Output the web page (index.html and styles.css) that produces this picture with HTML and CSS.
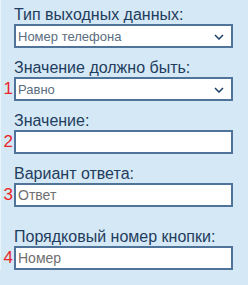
FILE: index.html
```html
<!DOCTYPE html>
<html lang="ru">
<head>
    <meta charset="UTF-8">
    <title>Настройки кнопки</title>
    <link rel="stylesheet" href="styles.css">
</head>
<body>
    <div class="panel">
        <div class="field">
            <label for="output-type">Тип выходных данных:</label>
            <div class="row">
                <span class="num"></span>
                <div class="select-wrap">
                    <select id="output-type">
                        <option>Номер телефона</option>
                    </select>
                    <svg class="chevron" width="10" height="6" viewBox="0 0 10 6"><path d="M1 1l4 4 4-4" fill="none" stroke="#1d3f66" stroke-width="1.5"/></svg>
                </div>
            </div>
        </div>
        <div class="field">
            <label for="compare">Значение должно быть:</label>
            <div class="row">
                <span class="num">1</span>
                <div class="select-wrap">
                    <select id="compare">
                        <option>Равно</option>
                    </select>
                    <svg class="chevron" width="10" height="6" viewBox="0 0 10 6"><path d="M1 1l4 4 4-4" fill="none" stroke="#1d3f66" stroke-width="1.5"/></svg>
                </div>
            </div>
        </div>
        <div class="field">
            <label for="value">Значение:</label>
            <div class="row">
                <span class="num">2</span>
                <input type="text" id="value">
            </div>
        </div>
        <div class="field">
            <label for="answer">Вариант ответа:</label>
            <div class="row">
                <span class="num">3</span>
                <input type="text" id="answer" placeholder="Ответ">
            </div>
        </div>
        <div class="field spaced">
            <label for="button-num">Порядковый номер кнопки:</label>
            <div class="row">
                <span class="num">4</span>
                <input type="text" id="button-num" placeholder="Номер">
            </div>
        </div>
    </div>
</body>
</html>
```

FILE: styles.css
```css
body {
    margin: 0;
    background-color: #d5e8f5;
    font-family: "Liberation Sans", Arial, sans-serif;
}
.panel {
    padding: 6px 15px 0 0;
    border-left: 1px solid #eaf4fb;
}
.field {
    margin-bottom: 11px;
}
.field.spaced {
    margin-top: 21px;
}
.field label {
    display: block;
    margin-left: 13px;
    font-size: 16px;
    line-height: 18px;
    color: #1f3d5e;
}
.row {
    display: flex;
    align-items: center;
}
.num {
    width: 13px;
    flex: none;
    text-align: right;
    padding-right: 1px;
    box-sizing: border-box;
    font-size: 17px;
    color: #e8262a;
}
.select-wrap {
    position: relative;
    flex: 1;
}
select,
input {
    display: block;
    width: 100%;
    height: 24px;
    box-sizing: border-box;
    margin: 0;
    padding: 0 2px;
    border: 2px solid #4f7399;
    border-radius: 0;
    background-color: white;
    font-family: "Liberation Sans", Arial, sans-serif;
    font-size: 14px;
    outline: none;
}
select {
    appearance: none;
    -webkit-appearance: none;
    font-size: 13px;
    color: #5a6d80;
}
input {
    flex: 1;
    width: auto;
    min-width: 0;
}
input::placeholder {
    color: #707070;
}
.chevron {
    position: absolute;
    right: 9px;
    top: 10px;
}
```
